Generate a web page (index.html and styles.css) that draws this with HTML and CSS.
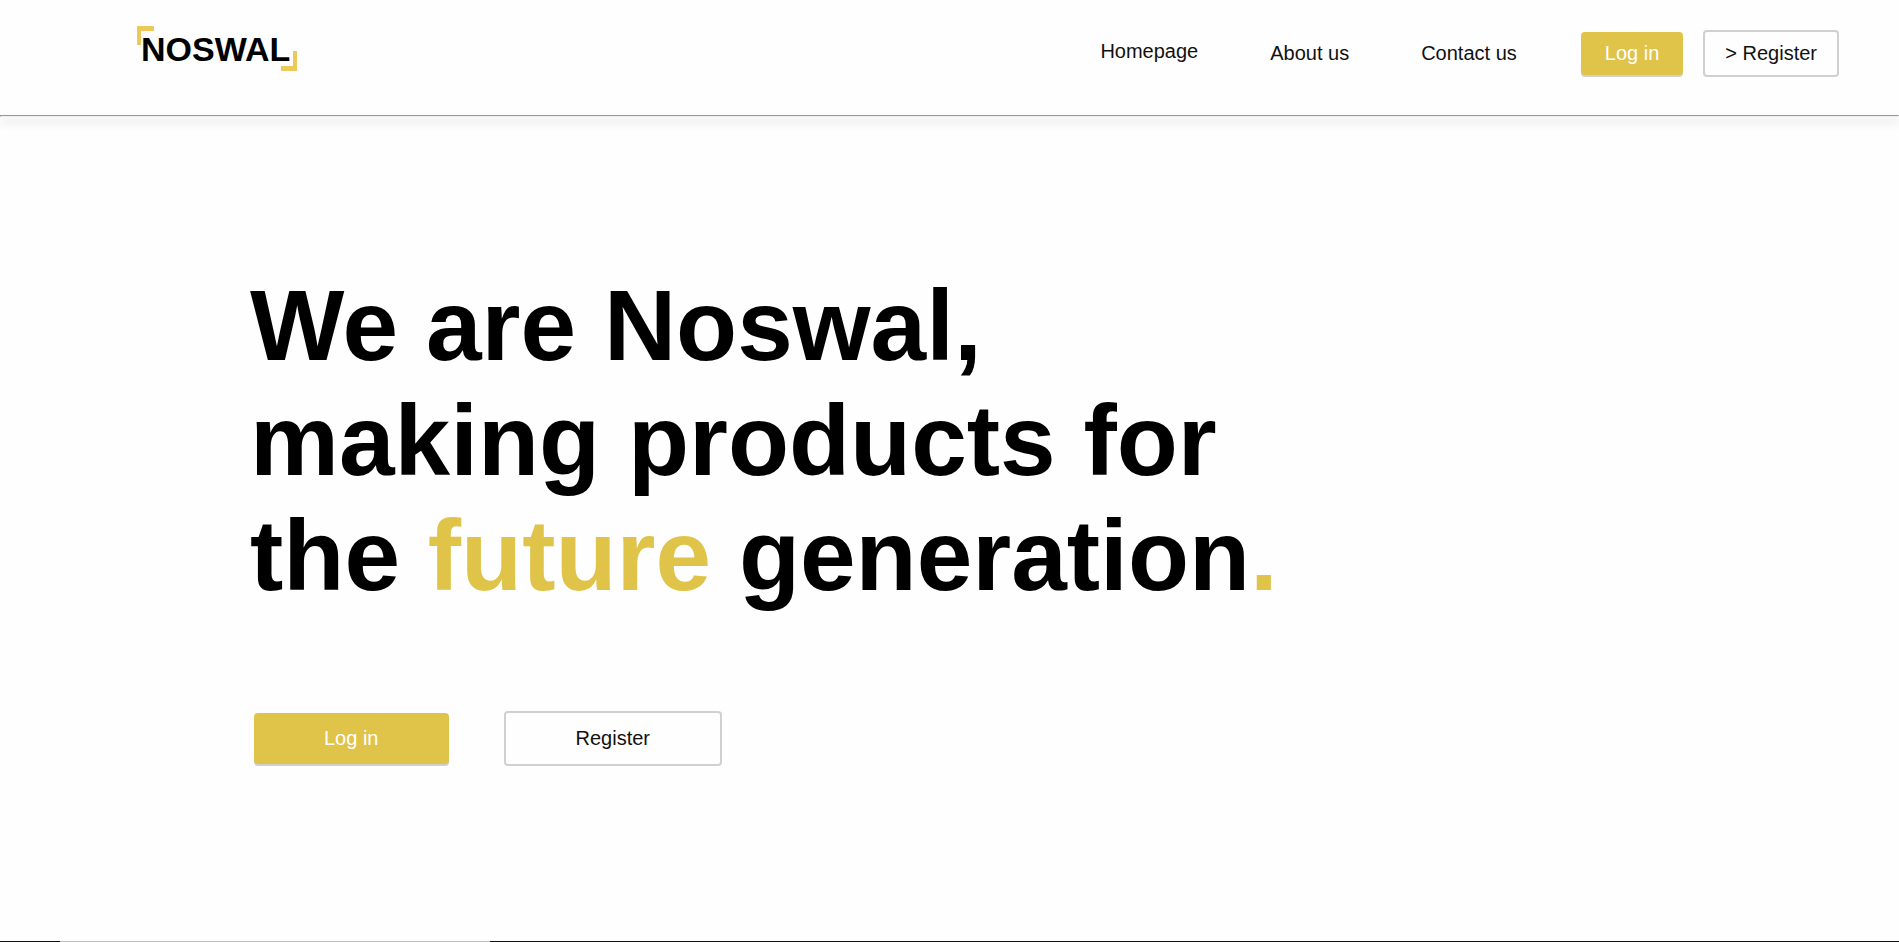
FILE: index.html
```html
<!DOCTYPE html>
<html lang="en">
<head>
<meta charset="utf-8">
<title>Noswal</title>
<link rel="stylesheet" href="styles.css">
</head>
<body>
<header class="header">
  <a class="logo" href="#" aria-label="Noswal">
    <svg class="logo-mark" viewBox="0 0 160 45" width="160" height="45">
      <path class="logo-corner" d="M0 0H17V5H4V19H0ZM156 25H160V45H144V40H156Z"/>
      <text class="logo-text" x="4" y="35">NOSWAL</text>
    </svg>
  </a>
  <nav class="nav">
    <a class="nav-link nav-link-active" href="#">Homepage</a>
    <a class="nav-link" href="#">About us</a>
    <a class="nav-link" href="#">Contact us</a>
  </nav>
  <div class="actions">
    <button class="button button-primary" type="button">Log in</button>
    <button class="button button-outline" type="button">&gt; Register</button>
  </div>
</header>
<hr class="divider">
<main class="hero">
  <h1 class="title">We are Noswal,<br>making products for<br>the <span class="accent">future</span> generation<span class="accent">.</span></h1>
  <div class="hero-actions">
    <button class="button button-primary button-wide" type="button">Log in</button>
    <button class="button button-outline button-wide" type="button">Register</button>
  </div>
</main>
<footer class="footer"><div class="footer-strip"></div></footer>
</body>
</html>
```
FILE: styles.css
```css
* {
  box-sizing: border-box;
}

body {
  margin: 0;
  min-height: 100vh;
  display: flex;
  flex-direction: column;
  background: #fefefe;
  color: #000;
  font-family: "Liberation Sans", Arial, sans-serif;
  font-size: 20px;
  line-height: 23px;
}

.header {
  display: flex;
  align-items: flex-start;
  padding: 26px 60px 38px 137px;
}

.logo {
  display: block;
  margin-right: auto;
}

.logo-mark {
  display: block;
  overflow: visible;
}

.logo-corner {
  fill: #edc95c;
}

.logo-text {
  font-family: "Liberation Sans", Arial, sans-serif;
  font-size: 34px;
  font-weight: 700;
  fill: #000;
}

.nav {
  display: flex;
  gap: 72px;
  margin-right: 64px;
  padding-top: 14px;
}

.nav-link {
  padding-top: 2px;
  color: #111;
  text-decoration: none;
}

.nav-link-active {
  padding-top: 0;
}

.actions {
  display: flex;
  align-items: center;
  gap: 20px;
  padding-top: 4px;
}

.button {
  border-radius: 4px;
  font: inherit;
  cursor: pointer;
}

.button-primary {
  padding: 10px 24px;
  border: 0;
  background: #e0c349;
  box-shadow: 0 2px 0 #d0d0d0;
  color: #fff;
}

.button-outline {
  padding: 10px 20px;
  border: 2px solid #d0d0d0;
  background: #fefefe;
  color: #111;
}

.divider {
  width: 100%;
  margin: 0;
  border: 1px solid #999;
  border-right-color: #eee;
  border-bottom-color: #eee;
  box-shadow: 0 5px 8px #ccc;
}

.hero {
  flex: 1;
  padding: 151px 250px 0;
}

.title {
  margin: 0;
  font-size: 100px;
  line-height: 115px;
}

.accent {
  color: #e0c349;
}

.hero-actions {
  display: flex;
  align-items: center;
  gap: 55px;
  margin: 98px 4px 0;
}

.button-wide {
  padding: 14px 70px;
}

.footer {
  height: 1px;
  padding-left: 60px;
  background: #111;
}

.footer-strip {
  width: 430px;
  height: 1px;
  background: #c0c0c0;
}
```
